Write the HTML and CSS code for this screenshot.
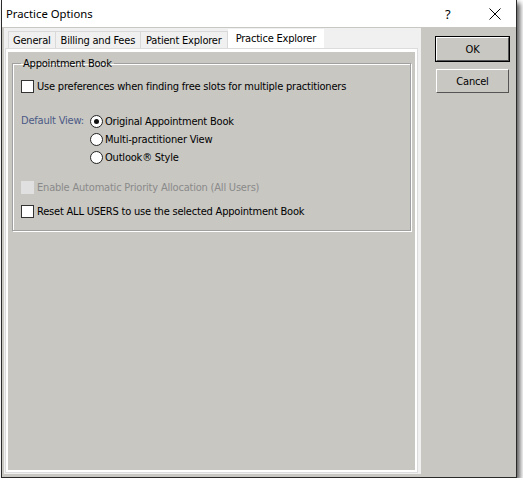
FILE: index.html
```html
<!doctype html>
<html lang="en">
  <head>
    <meta charset="UTF-8" />
    <title>Practice Options</title>
    <link rel="stylesheet" href="styles.css">
  </head>
  <body>
    <div class="dialog">
      <div class="titlebar">
        <span class="title">Practice Options</span>
        <span class="help">?</span>
        <span class="close">
          <svg width="12" height="12" viewBox="0 0 12 12">
            <path d="M0.5 0.5 L11.5 11.5 M11.5 0.5 L0.5 11.5" stroke="#000" stroke-width="1" fill="none" />
          </svg>
        </span>
      </div>
      <div class="client">
        <div class="tabs">
          <div class="tab-strip">
            <div class="tab">General</div>
            <div class="tab">Billing and Fees</div>
            <div class="tab">Patient Explorer</div>
            <div class="tab active">Practice Explorer</div>
          </div>
          <div class="page">
            <fieldset class="group">
              <legend>Appointment Book</legend>
              <label class="check"><span class="box"></span>Use preferences when finding free slots for multiple practitioners</label>
              <div class="view-row">
                <span class="view-label">Default View:</span>
                <div class="radios">
                  <label class="radio"><span class="dot checked"></span>Original Appointment Book</label>
                  <label class="radio"><span class="dot"></span>Multi-practitioner View</label>
                  <label class="radio"><span class="dot"></span>Outlook® Style</label>
                </div>
              </div>
              <label class="check disabled"><span class="box"></span>Enable Automatic Priority Allocation (All Users)</label>
              <label class="check"><span class="box"></span>Reset ALL USERS to use the selected Appointment Book</label>
            </fieldset>
          </div>
        </div>
        <div class="buttons">
          <button class="default">OK</button>
          <button>Cancel</button>
        </div>
      </div>
    </div>
  </body>
</html>
```

FILE: styles.css
```css
body {
  margin: 0;
  background: #fff;
  font-family: "DejaVu Sans Condensed", "DejaVu Sans", sans-serif;
  font-size: 11px;
  letter-spacing: -0.2px;
  color: #000;
}
.dialog {
  width: 514px;
  height: 477px;
  margin-left: 1px;
  border: 1px solid #2a2a2a;
  border-top: none;
  background: #c8c7c2;
  box-shadow: 3px 3px 5px rgba(0, 0, 0, 0.65);
  display: flex;
  flex-direction: column;
}
.titlebar {
  height: 27px;
  background: #fff;
  display: flex;
  align-items: center;
  font-family: "Noto Sans", sans-serif;
  font-size: 11.3px;
  letter-spacing: 0;
}
.title {
  padding-left: 4px;
  flex: 1;
}
.help {
  width: 39px;
  font-size: 13px;
}
.close {
  width: 22px;
  display: flex;
  justify-content: center;
  padding-right: 10px;
}
.client {
  flex: 1;
  display: flex;
  padding: 1px 0 3px 2px;
}
.tabs {
  width: 417px;
  background: #f0f0f0;
  display: flex;
  flex-direction: column;
  padding-top: 2px;
}
.tab-strip {
  display: flex;
  padding-left: 4px;
  height: 19px;
  align-items: flex-end;
}
.tab {
  height: 17px;
  line-height: 17px;
  padding: 0 5px;
  border: 1px solid #d9d9d9;
  border-bottom: none;
  background: #f0f0f0;
  margin-right: -1px;
}
.tab:first-child {
  padding: 0 4px;
}
.tab.active {
  height: 19px;
  line-height: 17px;
  background: #fff;
  margin-left: 1px;
  border-color: #fff;
  padding: 0 7px;
}
.page {
  flex: 1;
  margin: 0 4px 2px 2px;
  border: 2px solid #fff;
  border-top: 3px solid #fff;
  outline: 1px solid #dcdcdc;
  background: #c8c7c2;
  padding: 5px 4px 0 4px;
}
.group {
  margin: 0;
  padding: 7px 8px 10px 8px;
  border: 1px solid #a0a0a0;
  box-shadow: 1px 1px 0 #fff, inset 1px 1px 0 #fff;
}
.group legend {
  padding: 0 2px;
  margin-left: 0;
}
.check {
  display: flex;
  align-items: center;
  height: 18px;
}
.box {
  width: 11px;
  height: 11px;
  border: 1px solid #333;
  background: #fff;
  margin-right: 3px;
}
.check.disabled {
  color: #8a8a8a;
  margin-top: 12px;
}
.check.disabled .box {
  border-color: #e0e0e0;
  background: #e0e0e0;
}
.check.disabled + .check {
  margin-top: 6px;
}
.view-row {
  display: flex;
  margin-top: 17px;
}
.view-label {
  color: #4c5a86;
  width: 69px;
  line-height: 18px;
}
.radio {
  display: flex;
  align-items: center;
  height: 18px;
}
.dot {
  width: 11px;
  height: 11px;
  border: 1px solid #222;
  border-radius: 50%;
  background: #fff;
  margin-right: 2px;
  position: relative;
}
.dot.checked::after {
  content: "";
  position: absolute;
  left: 3px;
  top: 3px;
  width: 5px;
  height: 5px;
  border-radius: 50%;
  background: #111;
}
.buttons {
  display: flex;
  flex-direction: column;
  gap: 8px;
  padding: 9px 0 0 15px;
}
button {
  width: 73px;
  height: 24px;
  font-family: inherit;
  font-size: 11px;
  letter-spacing: -0.2px;
  background: #c8c7c2;
  border: 1px solid;
  border-color: #fff #555 #555 #fff;
  color: #000;
  padding: 0;
}
button.default {
  outline: 1px solid #000;
}
```
